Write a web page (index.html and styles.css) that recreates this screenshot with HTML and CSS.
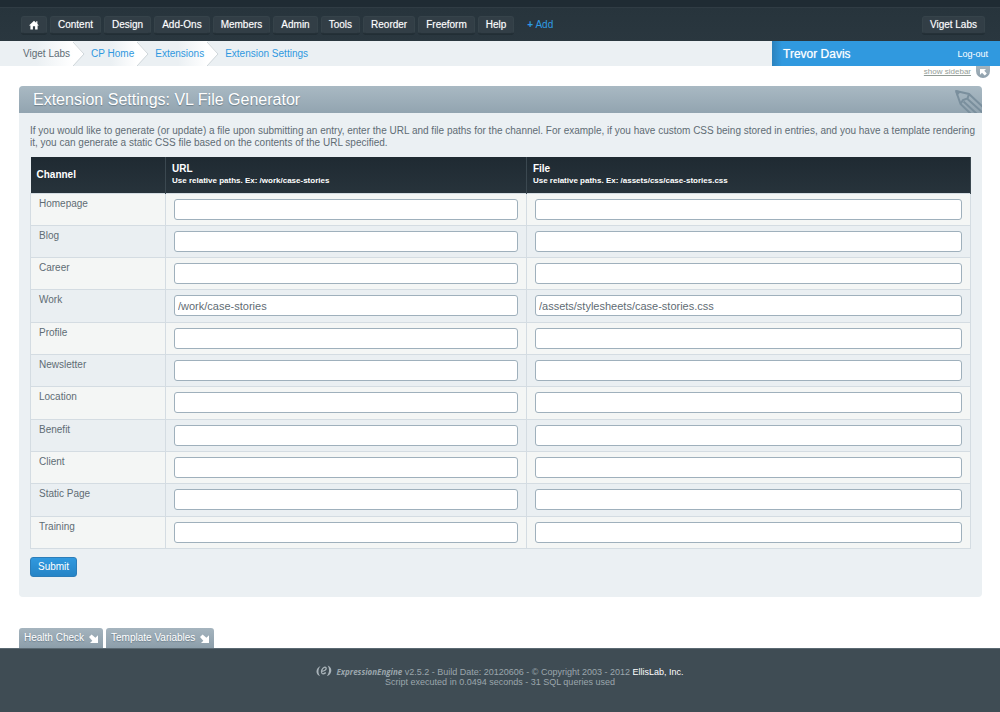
FILE: index.html
```html
<!DOCTYPE html>
<html lang="en">
<head>
<meta charset="utf-8">
<title>Extension Settings: VL File Generator</title>
<link rel="stylesheet" href="styles.css">
</head>
<body>
<header class="topbar">
  <nav class="menu" aria-label="Main">
    <a class="tab" href="#" aria-label="Home"><svg class="home" viewBox="0 0 10 10"><path d="M5 0.8L0 5.4h1.4V9.5h2.5V6.2h2.2v3.3h2.5V5.4H10L8.4 3.9V1.3H7.2v1.5z"/></svg></a>
    <a class="tab" href="#">Content</a>
    <a class="tab" href="#">Design</a>
    <a class="tab" href="#">Add-Ons</a>
    <a class="tab" href="#">Members</a>
    <a class="tab" href="#">Admin</a>
    <a class="tab" href="#">Tools</a>
    <a class="tab" href="#">Reorder</a>
    <a class="tab" href="#">Freeform</a>
    <a class="tab" href="#">Help</a>
    <a class="add" href="#"><b>+</b> Add</a>
  </nav>
  <a class="tab" href="#">Viget Labs</a>
</header>
<div class="subbar">
  <nav class="crumbs" aria-label="Breadcrumb">
    <a class="crumb site" href="#">Viget Labs</a>
    <svg class="chevron" viewBox="0 0 12 25"><path class="fill" d="M0 0L11 12.5L0 25z"/><path class="edge" d="M0 1L11 13L0 25"/></svg>
    <a class="crumb" href="#">CP Home</a>
    <svg class="chevron" viewBox="0 0 12 25"><path class="fill" d="M0 0L11 12.5L0 25z"/><path class="edge" d="M0 1L11 13L0 25"/></svg>
    <a class="crumb" href="#">Extensions</a>
    <svg class="chevron" viewBox="0 0 12 25"><path class="fill" d="M0 0L11 12.5L0 25z"/><path class="edge" d="M0 1L11 13L0 25"/></svg>
    <a class="crumb last" href="#">Extension Settings</a>
  </nav>
  <div class="user"><a class="name" href="#">Trevor Davis</a><a class="logout" href="#">Log-out</a></div>
</div>
<div class="sidebar-toggle">
  <a href="#">show sidebar</a>
  <button class="knob" type="button" aria-label="Show sidebar"><svg viewBox="0 0 14 12"><path d="M4 3h6L8.3 4.7L10.8 7.4L8.8 9.4L6 6.8L4 8.8z"/></svg></button>
</div>
<main class="panel">
  <div class="heading">
    <h1>Extension Settings: VL File Generator</h1>
    <svg class="pencil" viewBox="0 0 27 23"><path d="M1 1L14 4L30 19M1 1L5.5 14L16 24M14 4L12.5 8.5L8 10L5.5 14"/><path d="M12.5 9L28 23M8.5 11.5L22 24"/><path class="tip" d="M0 0L6 1.5L2 6z"/></svg>
  </div>
  <form class="content">
    <p class="intro">If you would like to generate (or update) a file upon submitting an entry, enter the URL and file paths for the channel. For example, if you have custom CSS being stored in entries, and you have a template rendering it, you can generate a static CSS file based on the contents of the URL specified.</p>
    <table class="grid">
      <colgroup><col class="c-channel"><col class="c-url"><col class="c-file"></colgroup>
      <thead><tr><th scope="col">Channel</th><th scope="col">URL<small>Use relative paths. Ex: /work/case-stories</small></th><th scope="col">File<small>Use relative paths. Ex: /assets/css/case-stories.css</small></th></tr></thead>
      <tbody>
        <tr><td>Homepage</td><td><input type="text" aria-label="Homepage URL"></td><td><input type="text" aria-label="Homepage file"></td></tr>
        <tr><td>Blog</td><td><input type="text" aria-label="Blog URL"></td><td><input type="text" aria-label="Blog file"></td></tr>
        <tr><td>Career</td><td><input type="text" aria-label="Career URL"></td><td><input type="text" aria-label="Career file"></td></tr>
        <tr><td>Work</td><td><input type="text" aria-label="Work URL" value="/work/case-stories"></td><td><input type="text" aria-label="Work file" value="/assets/stylesheets/case-stories.css"></td></tr>
        <tr><td>Profile</td><td><input type="text" aria-label="Profile URL"></td><td><input type="text" aria-label="Profile file"></td></tr>
        <tr><td>Newsletter</td><td><input type="text" aria-label="Newsletter URL"></td><td><input type="text" aria-label="Newsletter file"></td></tr>
        <tr><td>Location</td><td><input type="text" aria-label="Location URL"></td><td><input type="text" aria-label="Location file"></td></tr>
        <tr><td>Benefit</td><td><input type="text" aria-label="Benefit URL"></td><td><input type="text" aria-label="Benefit file"></td></tr>
        <tr><td>Client</td><td><input type="text" aria-label="Client URL"></td><td><input type="text" aria-label="Client file"></td></tr>
        <tr><td>Static Page</td><td><input type="text" aria-label="Static Page URL"></td><td><input type="text" aria-label="Static Page file"></td></tr>
        <tr><td>Training</td><td><input type="text" aria-label="Training URL"></td><td><input type="text" aria-label="Training file"></td></tr>
      </tbody>
    </table>
    <button class="submit" type="submit">Submit</button>
  </form>
</main>
<div class="drawers">
  <button class="drawer" type="button">Health Check <svg viewBox="0 0 9 9"><path d="M9 9H1L3.3 6.7L0 3L2.6 0.4L6.4 3.8L9 1.2z"/></svg></button>
  <button class="drawer" type="button">Template Variables <svg viewBox="0 0 9 9"><path d="M9 9H1L3.3 6.7L0 3L2.6 0.4L6.4 3.8L9 1.2z"/></svg></button>
</div>
<footer class="footer">
  <p><svg class="mark" viewBox="0 0 16 12"><path d="M4.6 1C1.2 2.3-0.6 6.2 1.2 9C1.8 10 2.8 10.8 4.2 11.2C1.8 8.6 1.8 4 4.6 1zM11.6 0.6C15 1.8 16.4 5.4 14.4 8.4C13.6 9.7 12.2 10.7 10.8 11C13.4 8.4 13.8 3.8 11.6 0.6z"/><path class="e" d="M5.6 6.4C8.4 6.2 10.4 4.8 10.2 3.2C9.8 1.2 6.8 2.4 5.8 5C4.6 8.4 6.4 10 9.8 7.6"/></svg><b class="brand">ExpressionEngine</b> v2.5.2 - Build Date: 20120606 - © Copyright 2003 - 2012 <a href="#">EllisLab, Inc.</a></p>
  <p>Script executed in 0.0494 seconds - 31 SQL queries used</p>
</footer>
</body>
</html>
```
FILE: styles.css
```css
* { box-sizing: border-box; }
body {
  margin: 0;
  min-height: 100vh;
  display: flex;
  flex-direction: column;
  background: #fff;
  color: #5f6c74;
  font: 10px/12px "Liberation Sans", Arial, sans-serif;
}
a { color: inherit; text-decoration: none; }
button { font: inherit; cursor: pointer; }
h1, p { margin: 0; }

.topbar {
  display: flex;
  justify-content: space-between;
  align-items: flex-start;
  padding: 9px 15px 7px 21px;
  background: linear-gradient(#27343c, #2a373f);
  border-top: 7px solid #1f2b33;
  box-shadow: inset 0 1px #303c44;
}
.menu { display: flex; gap: 3px; }
.tab {
  display: flex;
  align-items: center;
  height: 18px;
  padding: 0 7px;
  border: 1px solid #36434a;
  border-bottom-color: #253138;
  border-radius: 3px;
  background: #323e46;
  color: #fff;
  text-shadow: 0 0 1px #8c969c;
  box-shadow: 0 1px #222e35;
}
.home { width: 10px; height: 10px; fill: #fff; }
.add { padding: 3px 10px; color: #2f9be3; }

.subbar {
  display: flex;
  justify-content: space-between;
  height: 25px;
  background: #ebf0f3;
}
.crumbs { display: flex; align-items: center; }
.crumb {
  padding: 0 3px 0 6px;
  line-height: 25px;
  color: #2f98e0;
  background: linear-gradient(90deg, #ebf0f3 50%, #fff);
}
.crumb.site { padding-left: 23px; color: #5f6c74; }
.crumb.last { background: none; }
.chevron { width: 12px; height: 25px; }
.chevron .fill { fill: #fff; }
.chevron .edge { fill: none; stroke: #cfd6da; }
.user {
  display: flex;
  justify-content: space-between;
  align-items: center;
  width: 228px;
  padding: 0 12px 0 11px;
  background: linear-gradient(90deg, #2b82bd, #3099df 10px);
  color: #fff;
}
.name { font-size: 12px; text-shadow: 0 0 1px #b9dcf5; }
.logout { font-size: 9px; }

.sidebar-toggle {
  display: flex;
  justify-content: flex-end;
  gap: 5px;
  height: 20px;
  padding-right: 10px;
  font-size: 8px;
  color: #929c96;
}
.sidebar-toggle a { text-decoration: underline; }
.knob {
  width: 14px;
  height: 12px;
  padding: 0;
  border: 0;
  border-radius: 0 0 7px 7px;
  background: linear-gradient(#a7b5be, #8d9fab);
}
.knob svg { display: block; fill: #fff; }

.panel {
  margin: 0 18px 0 19px;
  border-radius: 4px;
  background: #ebf0f3;
  overflow: hidden;
}
.heading {
  display: flex;
  justify-content: space-between;
  align-items: flex-end;
  height: 27px;
  padding-left: 14px;
  background: linear-gradient(#a9b9c3, #92a4b0);
}
.heading h1 {
  font-size: 16px;
  font-weight: normal;
  line-height: 27px;
  color: #fff;
  text-shadow: 0 1px 1px #6d7f8b;
}
.pencil { width: 27px; height: 23px; fill: none; stroke: #7a8f9d; stroke-width: 2; }
.pencil .tip { fill: #7a8f9d; stroke: none; }
.content { padding: 12px 0 20px 11px; }
.intro { margin-bottom: 8px; line-height: 12px; }

.grid {
  width: calc(100% - 11px);
  height: 392px;
  table-layout: fixed;
  border-collapse: collapse;
}
.c-channel { width: 135px; }
.c-url { width: 38.4%; }
.grid thead { background: linear-gradient(#1f2a32, #27333b); }
.grid th {
  height: 36px;
  padding: 0 6px;
  border-right: 1px solid #3b4850;
  text-align: left;
  line-height: 12px;
  color: #fff;
}
.grid th small { display: block; font-size: 8px; line-height: 11px; }
.grid td { padding: 4px 8px; border: 1px solid #d4dce2; vertical-align: top; }
.grid td + td { padding: 5px 8px; }
.grid tbody tr { background: #f4f6f5; }
.grid tbody tr:nth-child(even) { background: #eaeff2; }
.grid input {
  display: block;
  width: 100%;
  height: 21px;
  padding: 0 3px;
  border: 1px solid #9fb0bc;
  border-radius: 3px;
  background: #fff;
  color: #5f6c74;
  font: 11px "Liberation Sans", Arial, sans-serif;
}
.submit {
  display: block;
  height: 20px;
  margin-top: 8px;
  padding: 0 7px;
  border: 1px solid #2b7db9;
  border-radius: 3px;
  background: linear-gradient(#3099df, #2584c6);
  color: #fff;
}

.drawers { display: flex; gap: 3px; margin-top: auto; padding: 31px 19px 0; }
.drawer {
  display: flex;
  align-items: center;
  gap: 5px;
  height: 20px;
  padding: 0 5px;
  border: 0;
  border-radius: 3px 3px 0 0;
  background: linear-gradient(#a5b4be, #8c9eaa);
  color: #fff;
  text-shadow: 0 1px 1px #6d7f8b;
}
.drawer svg { width: 9px; height: 9px; fill: #fff; }
.footer {
  padding: 18px 0 25px;
  border-top: 1px solid #5a6972;
  background: #3f4c54;
  color: #9ba6ac;
  text-align: center;
  font-size: 9px;
  line-height: 10px;
}
.footer a { color: #fff; }
.mark { width: 16px; height: 12px; margin: -4px 4px -2px 0; fill: #aab4ba; }
.mark .e { fill: none; stroke: #aab4ba; stroke-width: 1.3; }
.brand { font: italic bold 8px/10px "Open Sans", sans-serif; }
```
